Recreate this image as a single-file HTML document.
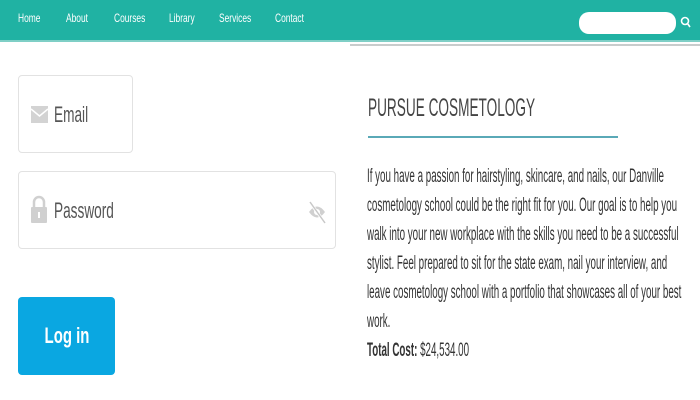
<!DOCTYPE html>
<html><head><meta charset="utf-8"><style>
*{margin:0;padding:0;box-sizing:border-box}
body{width:700px;height:400px;overflow:hidden;background:#fff;font-family:"Liberation Sans",sans-serif;position:relative}
.nav{position:absolute;left:0;top:0;width:700px;height:42px;background:#20b2a3;border-bottom:2px solid #7fcfc6}
.nav a{position:absolute;top:11px;color:#fff;font-size:12px;text-decoration:none;transform:scaleX(.7);transform-origin:0 0;white-space:nowrap}
.search{position:absolute;left:579px;top:12px;width:97px;height:22px;background:#fff;border-radius:10px}
.sline{position:absolute;left:350px;top:44px;width:350px;height:2px;background:#c8cccc}
.box{position:absolute;border:1px solid #e2e2e2;border-radius:4px;background:#fff}
.lbl{position:absolute;color:#555;font-size:22px;transform:scaleX(.62);transform-origin:0 0;white-space:nowrap}
.btn{position:absolute;left:18px;top:297px;width:97px;height:78px;background:#0aa7e1;border-radius:4px;color:#fff;font-weight:bold;font-size:22px;text-align:center;line-height:78px}
.btn span{display:inline-block;transform:scaleX(.68)}
h1{position:absolute;left:368px;top:94px;font-weight:normal;font-size:25px;color:#444;transform:scaleX(.545);transform-origin:0 0;white-space:nowrap}
.ul{position:absolute;left:368px;top:136px;width:250px;height:2px;background:#5aa9b7}
.p{position:absolute;left:367px;top:162px;font-size:19px;line-height:29px;color:#333;white-space:nowrap;transform:scaleX(.515);transform-origin:0 0}
</style></head><body>
<div class="nav">
<a style="left:18px">Home</a><a style="left:66px">About</a><a style="left:114px">Courses</a><a style="left:169px">Library</a><a style="left:219px">Services</a><a style="left:275px">Contact</a>
<div class="search"></div>
<svg style="position:absolute;left:680px;top:15px" width="12" height="14" viewBox="0 0 12 14"><circle cx="5" cy="6" r="3.5" fill="none" stroke="#fff" stroke-width="1.6"/><path d="M7.5 8.5L10 12" stroke="#fff" stroke-width="1.6"/></svg>
</div>
<div class="sline"></div>
<div class="box" style="left:18px;top:75px;width:115px;height:78px"></div>
<svg style="position:absolute;left:31px;top:106px" width="17" height="17" viewBox="0 0 17 17"><rect width="17" height="17" fill="#d3d3d3"/><path d="M0 3L8.5 10L17 3" fill="none" stroke="#fff" stroke-width="1.5"/></svg>
<div class="lbl" style="left:54px;top:102px">Email</div>
<div class="box" style="left:18px;top:171px;width:318px;height:78px"></div>
<svg style="position:absolute;left:31px;top:195px" width="16" height="28" viewBox="0 0 16 28"><path d="M3 12V7a5 5 0 0 1 10 0v5" fill="none" stroke="#d0d0d0" stroke-width="2.5"/><rect x="0" y="12" width="16" height="16" rx="1" fill="#d0d0d0"/><rect x="7" y="17" width="2" height="6" fill="#fff"/></svg>
<div class="lbl" style="left:54px;top:198px">Password</div>
<svg style="position:absolute;left:307px;top:199px" width="20" height="26" viewBox="0 0 20 26"><path d="M2 13Q10 2 18 13Q10 24 2 13Z" fill="#d0d0d0"/><circle cx="10" cy="13" r="3" fill="#fff"/><path d="M2 2L18 24" stroke="#fff" stroke-width="3"/><path d="M3 3L18 24" stroke="#c8c8c8" stroke-width="1.5"/></svg>
<div class="btn"><span>Log in</span></div>
<h1>PURSUE COSMETOLOGY</h1>
<div class="ul"></div>
<div class="p">If you have a passion for hairstyling, skincare, and nails, our Danville<br>cosmetology school could be the right fit for you. Our goal is to help you<br>walk into your new workplace with the skills you need to be a successful<br>stylist. Feel prepared to sit for the state exam, nail your interview, and<br>leave cosmetology school with a portfolio that showcases all of your best<br>work.<br><b>Total Cost:</b> $24,534.00</div>
</body></html>
